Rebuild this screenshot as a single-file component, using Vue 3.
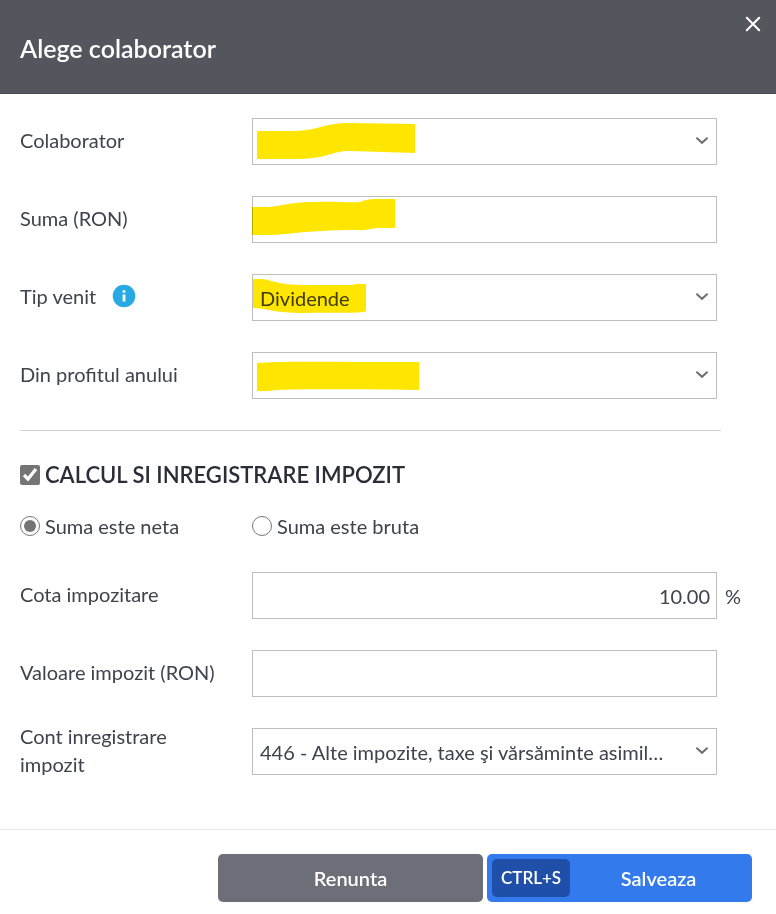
<template>
  <form class="dialog" @submit.prevent="save">
    <header class="dialog-header">
      <h1 class="dialog-title">Alege colaborator</h1>
      <button type="button" class="btn-close" aria-label="Inchide" @click="cancel">
        <svg width="16" height="16" viewBox="0 0 16 16" aria-hidden="true">
          <path d="M1.8 1.8 L14.2 14.2 M14.2 1.8 L1.8 14.2" />
        </svg>
      </button>
    </header>

    <div class="dialog-body">
      <div v-for="field in incomeFields" :key="field.id" class="form-row">
        <div class="row-label">
          <label :for="field.id">{{ field.label }}</label>
          <button v-if="field.info" type="button" class="btn-info" aria-label="Informatii">
            <svg width="24" height="24" viewBox="0 0 24 24" aria-hidden="true">
              <circle cx="12" cy="12" r="11.3" fill="#27a9e3" />
              <path d="M10.6 6.2h2.8v2.5h-2.8z M10.6 10.4h2.8v7.2h-2.8z" fill="#fff" />
            </svg>
          </button>
        </div>
        <div class="control">
          <template v-if="field.options">
            <select :id="field.id" v-model="form[field.id]">
              <option v-for="option in field.options" :key="option" :value="option">
                {{ option }}
              </option>
            </select>
            <svg class="chevron" width="14" height="10" viewBox="0 0 14 10" aria-hidden="true">
              <path d="M2 2.2 L7 6.8 L12 2.2" />
            </svg>
          </template>
          <input v-else :id="field.id" v-model="form[field.id]" type="text" />
          <svg class="marker" width="180" height="47" viewBox="0 0 180 47" aria-hidden="true">
            <path :d="field.marker" />
          </svg>
        </div>
      </div>

      <hr class="divider" />

      <label class="tax-toggle">
        <input v-model="form.withTax" type="checkbox" />
        <span>CALCUL SI INREGISTRARE IMPOZIT</span>
      </label>

      <div class="radio-row">
        <label class="radio">
          <input v-model="form.amountType" type="radio" name="amountType" value="neta" />
          <span>Suma este neta</span>
        </label>
        <label class="radio">
          <input v-model="form.amountType" type="radio" name="amountType" value="bruta" />
          <span>Suma este bruta</span>
        </label>
      </div>

      <div class="form-row">
        <label class="row-label" for="rate">Cota impozitare</label>
        <div class="control">
          <input id="rate" v-model="form.rate" class="text-end" type="text" />
        </div>
        <span class="suffix">%</span>
      </div>

      <div class="form-row">
        <label class="row-label" for="taxValue">Valoare impozit (RON)</label>
        <div class="control">
          <input id="taxValue" v-model="form.taxValue" type="text" />
        </div>
      </div>

      <div class="form-row">
        <label class="row-label" for="account">Cont inregistrare impozit</label>
        <div class="control">
          <select id="account" v-model="form.account">
            <option value="446">446 - Alte impozite, taxe şi vărsăminte asimilate</option>
          </select>
          <svg class="chevron" width="14" height="10" viewBox="0 0 14 10" aria-hidden="true">
            <path d="M2 2.2 L7 6.8 L12 2.2" />
          </svg>
        </div>
      </div>
    </div>

    <footer class="dialog-footer">
      <button type="button" class="btn btn-cancel" @click="cancel">Renunta</button>
      <button type="submit" class="btn btn-save">
        <kbd>CTRL+S</kbd>
        <span>Salveaza</span>
      </button>
    </footer>
  </form>
</template>

<script setup>
import { reactive } from "vue";

const form = reactive({
  partner: "",
  amount: "",
  incomeType: "Dividende",
  profitYear: "",
  withTax: true,
  amountType: "neta",
  rate: "10.00",
  taxValue: "",
  account: "446",
});

// marker = highlighter stroke over the field value
const incomeFields = [
  {
    id: "partner",
    label: "Colaborator",
    options: [""],
    marker:
      "M5 13 H38 C68 13 70 5 98 5 L163 6 V35 L98 33 C78 33 78 41 40 41 H5 Z",
  },
  {
    id: "amount",
    label: "Suma (RON)",
    marker:
      "M0 11 C32 12 32 6 62 6 C82 5 92 7 108 6 C116 3 118 3 128 3 H143 V32 H128 C118 32 116 35 106 34 C92 34 82 34 70 35 C42 36 32 40 0 39 Z",
  },
  {
    id: "incomeType",
    label: "Tip venit",
    info: true,
    options: ["Dividende"],
    marker:
      "M1 5 H11 C24 8 32 11 52 11 C72 11 84 11 100 11 L104 10 H114 V37 C110 40 80 38 52 39 C20 39 20 35 1 34 Z",
  },
  {
    id: "profitYear",
    label: "Din profitul anului",
    options: [""],
    marker: "M5 11 C30 9 60 10 167 10 V38 C70 37 26 37 18 39 H5 Z",
  },
];

const save = () => {
  console.log("save", { ...form });
};

const cancel = () => {
  console.log("cancel");
};
</script>

<style>
body {
  margin: 0;
  background: #fff;
}
</style>

<style scoped>
.dialog {
  font-family: Lato, "Open Sans", sans-serif;
  font-size: 20px;
  line-height: 28px;
  color: #40424d;
}

.dialog * {
  box-sizing: border-box;
}

.dialog-header {
  display: flex;
  align-items: flex-start;
  justify-content: space-between;
  height: 94px;
  padding: 14px 13px 0 20px;
  background: #54565e;
  border-bottom: 1px solid #484a52;
}

.dialog-title {
  margin: 20px 0 0;
  font-size: 25px;
  font-weight: 600;
  line-height: 28px;
  color: #fff;
}

.btn-close,
.btn-info {
  display: flex;
  padding: 2px;
  border: 0;
  background: none;
  cursor: pointer;
}

.btn-close path {
  fill: none;
  stroke: #fff;
  stroke-width: 2.1;
  stroke-linecap: round;
}

.btn-info {
  padding: 0;
}

.dialog-body {
  padding: 24px 0 54px 20px;
}

.form-row {
  display: grid;
  grid-template-columns: 232px 1fr 59px;
  align-items: center;
}

.form-row + .form-row {
  margin-top: 31px;
}

/* two-line labels may reach into the gap between the rows */
.row-label {
  display: flex;
  align-items: center;
  gap: 16px;
  margin: -7px 0 -4px;
  padding-right: 28px;
}

.control {
  position: relative;
}

.control input,
.control select {
  display: block;
  width: 100%;
  height: 47px;
  padding: 0 7px;
  border: 1px solid #bebebe;
  border-radius: 0;
  background: #fff;
  font: inherit;
  color: inherit;
  appearance: none;
}

.control select {
  padding-right: 44px;
  text-overflow: ellipsis;
}

.control .text-end {
  padding-right: 6px;
  text-align: right;
}

.chevron {
  position: absolute;
  top: 18px;
  right: 8px;
  pointer-events: none;
}

.chevron path {
  fill: none;
  stroke: #6c6e78;
  stroke-width: 2;
  stroke-linecap: round;
}

.marker {
  position: absolute;
  top: 0;
  left: 0;
  pointer-events: none;
  mix-blend-mode: multiply;
}

.marker path {
  fill: #ffe600;
}

.suffix {
  padding-left: 8px;
}

.divider {
  margin: 31px 55px 30px 0;
  border: 0;
  border-top: 1px solid #d4d4d4;
}

.tax-toggle,
.radio {
  display: flex;
  align-items: center;
  gap: 5px;
}

.tax-toggle {
  font-size: 22px;
  font-weight: 600;
  color: #2b2d38;
}

.tax-toggle input,
.radio input {
  width: 20px;
  height: 20px;
  margin: 0;
  accent-color: #757575;
}

.radio-row {
  display: grid;
  grid-template-columns: 232px 1fr;
  margin: 23px 0 32px;
}

.dialog-footer {
  display: flex;
  justify-content: flex-end;
  gap: 4px;
  padding: 24px 24px 12px;
  border-top: 1px solid #e4e4e4;
}

.btn {
  display: flex;
  align-items: center;
  justify-content: center;
  width: 265px;
  height: 48px;
  padding: 5px;
  border: 0;
  border-radius: 5px;
  font: inherit;
  font-weight: 600;
  color: #fff;
  cursor: pointer;
}

.btn-cancel {
  background: #6c6e78;
}

.btn-save {
  background: #337aec;
}

.btn-save kbd {
  padding: 5px 9px;
  border-radius: 5px;
  background: #1f4fa8;
  font-family: inherit;
  font-size: 17px;
}

.btn-save span {
  flex: 1;
}
</style>
